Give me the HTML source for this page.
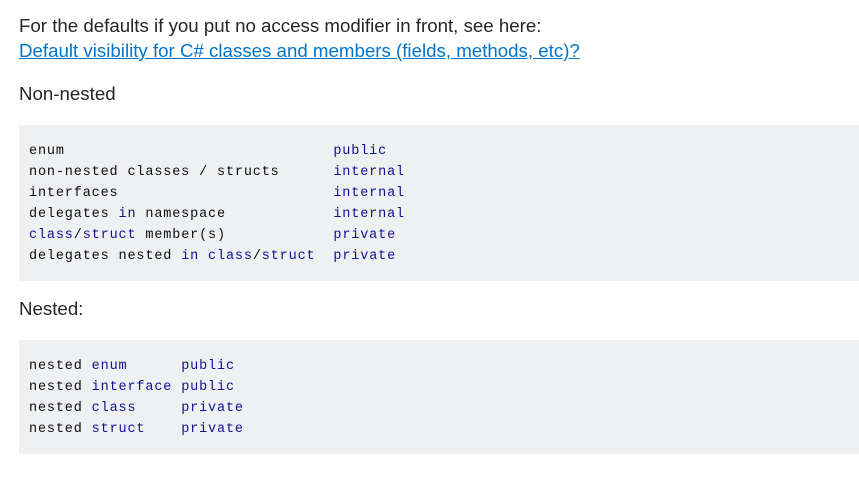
<!DOCTYPE html>
<html><head><meta charset="utf-8"><style>
body{margin:0;background:#fff;font-family:"Liberation Sans",Arial,sans-serif;color:#232629;font-size:18.7px;}
.w{position:absolute;left:19px;top:0;width:840px;}
p{margin:0;line-height:25px;}
a{color:#0074cc;text-decoration:underline;}
pre{margin:0;background:#eff0f1;font-family:"Liberation Mono",monospace;font-size:13.5px;letter-spacing:0.85px;line-height:21px;color:#0c0d0e;padding:16px 10px 14px 10px;white-space:pre;}
.k{color:#101094;}
</style></head><body>
<div class="w">
<p style="position:absolute;top:13px;">For the defaults if you put no access modifier in front, see here:<br><a>Default visibility for C# classes and members (fields, methods, etc)?</a></p>
<p style="position:absolute;top:81px;">Non-nested</p>
<pre style="position:absolute;top:125px;left:0;width:820px;height:126px;">enum                              <span class="k">public</span>
non-nested classes / structs      <span class="k">internal</span>
interfaces                        <span class="k">internal</span>
delegates <span class="k">in</span> namespace            <span class="k">internal</span>
<span class="k">class</span>/<span class="k">struct</span> member(s)            <span class="k">private</span>
delegates nested <span class="k">in</span> <span class="k">class</span>/<span class="k">struct</span>  <span class="k">private</span></pre>
<p style="position:absolute;top:296px;">Nested:</p>
<pre style="position:absolute;top:340px;left:0;width:820px;height:84px;">nested <span class="k">enum</span>      <span class="k">public</span>
nested <span class="k">interface</span> <span class="k">public</span>
nested <span class="k">class</span>     <span class="k">private</span>
nested <span class="k">struct</span>    <span class="k">private</span></pre>
</div>
</body></html>
